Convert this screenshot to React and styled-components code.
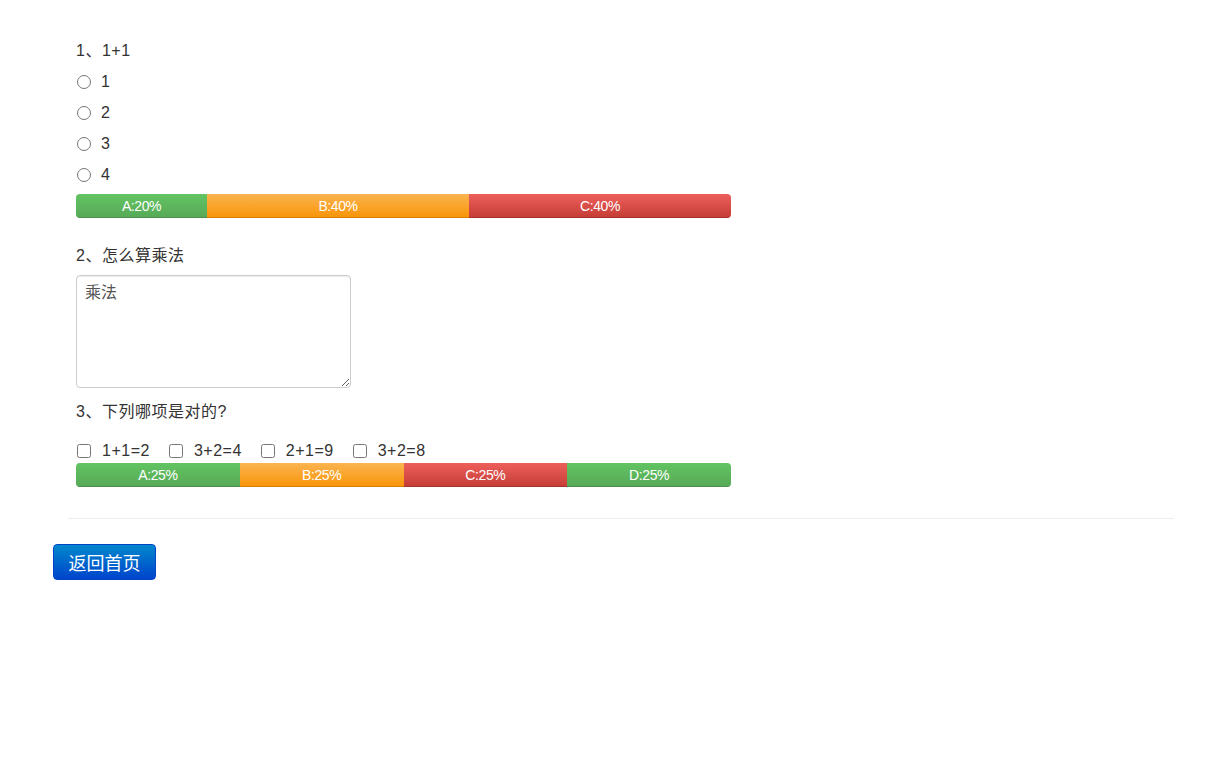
import React from "react";
import styled, { createGlobalStyle } from "styled-components";

const Global = createGlobalStyle`
  body {
    margin: 0;
    background: #fff;
    font-family: "Liberation Sans", "Noto Sans CJK SC", sans-serif;
    color: #333;
  }
`;

const Page = styled.div`
  padding: 35px 0 0 53px;
`;

const Main = styled.div`
  margin-left: 15px;
  width: 1106px;
`;

const Questions = styled.div`
  padding-left: 8px;
  width: 655px;
  letter-spacing: 0.5px;
`;

const Title = styled.div`
  font-size: 16px;
  line-height: 31px;
  margin-top: ${p => p.$top || 0}px;
`;

const OptionRow = styled.label`
  display: flex;
  align-items: center;
  gap: 10px;
  font-size: 16px;
  line-height: 31px;
`;

const Radio = styled.input.attrs({ type: "radio" })`
  margin: 0 0 0 1px;
  width: 14px;
  height: 14px;
`;

const CheckRow = styled.div`
  display: flex;
  align-items: center;
  margin-top: 12px;
  height: 24px;
  font-size: 16px;
`;

const Check = styled.label`
  display: flex;
  align-items: center;
  gap: 11px;
  margin-right: 18px;
`;

const CheckBox = styled.input.attrs({ type: "checkbox" })`
  margin: 0 0 0 1px;
  width: 14px;
  height: 14px;
`;

const Progress = styled.div`
  display: flex;
  height: 24px;
  margin-top: ${p => p.$top || 0}px;
  border-radius: 4px;
  overflow: hidden;
  background: #f5f5f5;
  letter-spacing: -0.4px;
`;

const grads = {
  success: "linear-gradient(to bottom, #62c462, #57a957)",
  warning: "linear-gradient(to bottom, #fbb450, #f89406)",
  danger: "linear-gradient(to bottom, #ee5f5b, #c43c35)",
};

const Bar = styled.div`
  background: ${p => grads[p.$kind]};
  color: #fff;
  font-size: 14px;
  line-height: 25px;
  text-align: center;
  box-shadow: inset 0 -1px 0 rgba(0, 0, 0, 0.15);
`;

const Answer = styled.textarea`
  display: block;
  box-sizing: border-box;
  width: 275px;
  height: 113px;
  margin-top: 4px;
  padding: 6px 8px;
  border: 1px solid #ccc;
  border-radius: 4px;
  box-shadow: inset 0 1px 1px rgba(0, 0, 0, 0.075);
  font-family: inherit;
  font-size: 16px;
  line-height: 22px;
  color: #555;
  resize: both;
`;

const Rule = styled.hr`
  margin: 31px 0 0;
  border: 0;
  border-top: 1px solid #eee;
`;

const HomeButton = styled.button`
  margin-top: 25px;
  width: 103px;
  height: 36px;
  border: 1px solid #0044cc;
  border-radius: 4px;
  background: linear-gradient(to bottom, #0088cc, #0044cc);
  color: #fff;
  font-family: inherit;
  font-size: 18px;
  padding: 0;
  cursor: pointer;
`;

const q1 = [
  { label: "A:20%", pct: 20, kind: "success" },
  { label: "B:40%", pct: 40, kind: "warning" },
  { label: "C:40%", pct: 40, kind: "danger" },
];

const q3 = [
  { label: "A:25%", pct: 25, kind: "success" },
  { label: "B:25%", pct: 25, kind: "warning" },
  { label: "C:25%", pct: 25, kind: "danger" },
  { label: "D:25%", pct: 25, kind: "success" },
];

const Stats = ({ data, top }) => (
  <Progress $top={top}>
    {data.map(d => (
      <Bar key={d.label} $kind={d.kind} style={{ width: d.pct + "%" }}>
        {d.label}
      </Bar>
    ))}
  </Progress>
);

export default function App() {
  return (
    <Page>
      <Global />
      <Main>
        <Questions>
          <Title>1、1+1</Title>
          {["1", "2", "3", "4"].map(o => (
            <OptionRow key={o}>
              <Radio name="q1" />
              {o}
            </OptionRow>
          ))}
          <Stats data={q1} top={4} />

          <Title $top={22}>2、怎么算乘法</Title>
          <Answer defaultValue="乘法" />

          <Title $top={8}>3、下列哪项是对的?</Title>
          <CheckRow>
            {["1+1=2", "3+2=4", "2+1=9", "3+2=8"].map(o => (
              <Check key={o}>
                <CheckBox />
                {o}
              </Check>
            ))}
          </CheckRow>
          <Stats data={q3} top={0} />
        </Questions>
        <Rule />
      </Main>
      <HomeButton>返回首页</HomeButton>
    </Page>
  );
}
